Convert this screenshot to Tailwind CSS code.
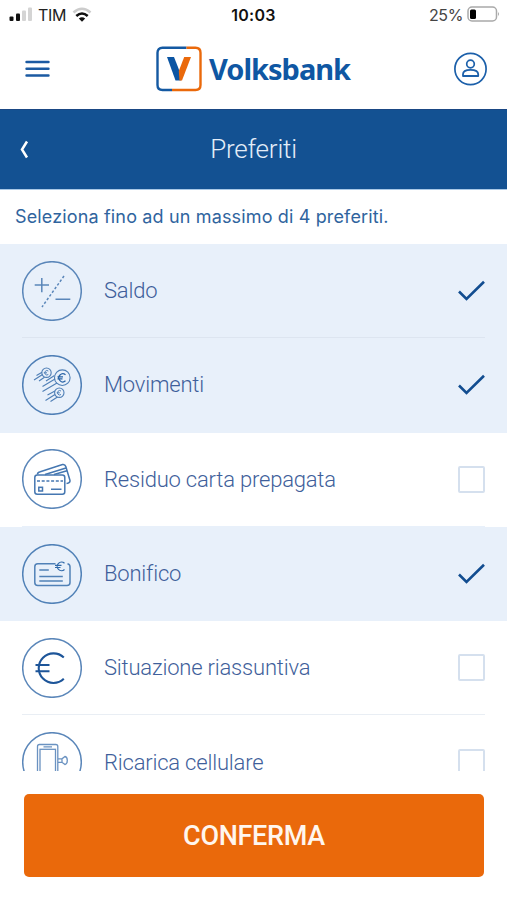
<!DOCTYPE html>
<html lang="it">
<head>
<meta charset="utf-8">
<title>Preferiti</title>
<script src="https://cdn.jsdelivr.net/npm/@tailwindcss/browser@4"></script>
</head>
<body class="bg-white">
<div class="flex h-[900px] w-[507px] flex-col overflow-hidden bg-white font-['Roboto',sans-serif]">
  <!-- Status bar -->
  <div class="grid h-[30px] grid-cols-3 items-center pl-[9px] pr-[7px] font-['Inter',sans-serif] text-[16px] text-[#222]">
    <div class="flex items-center">
      <svg class="w-[24px] h-[16px]" viewBox="0 0 24 16"><rect x="0.5" y="9.5" width="4" height="4.5" rx="1" fill="#111"/><rect x="7" y="6.5" width="4" height="7.500" rx="1" fill="#111"/><rect x="13" y="3.500" width="4" height="10.500" rx="1" fill="#d4d4d4"/><rect x="19" y="0.500" width="4" height="13.500" rx="1" fill="#d4d4d4"/></svg>
      <span class="ml-[5px] tracking-[-0.3px]">TIM</span>
      <svg class="ml-[6px] h-[16px] w-[20px]" viewBox="0 0 20 16" fill="none"><path d="M1.500 5.500Q10-2 18.500 5.500" stroke="#ccc" stroke-width="2.600"/><path d="M4.300 9Q10 4 15.700 9" stroke="#111" stroke-width="2.600"/><path d="M6.800 11.500Q10 9 13.200 11.500L10 14.700Z" fill="#111"/></svg>
    </div>
    <div class="pr-[2px] text-center font-semibold tracking-[0.3px] text-[#111]">10:03</div>
    <div class="flex items-center justify-end">
      <span class="mr-[4px] tracking-[-0.4px] text-[#444]">25%</span>
      <svg class="h-[18px] w-[33px]" viewBox="0 0 33 18" fill="none"><rect x="1" y="1" width="28.500" height="14" rx="4" stroke="#a9a9a9" stroke-width="1.500"/><rect x="3" y="3.500" width="6" height="9.500" rx="1.500" fill="#000"/><path d="M31 6Q33 8 31 10Z" fill="#a9a9a9"/></svg>
    </div>
  </div>
  <!-- Brand header -->
  <header class="flex h-[79px] items-center pb-[2px] pl-[25px] pr-[19px]">
    <svg class="h-[18px] w-[25px]" viewBox="0 0 25 18" stroke="#1b5aa2" stroke-width="2.400" stroke-linecap="round"><path d="M1.500 2H23.500M1.500 8.800H23.500M1.500 15.500H23.500"/></svg>
    <div class="ml-[106px] flex items-center">
      <svg class="h-[46px] w-[46px]" viewBox="0 0 46 46" fill="none"><path d="M30.500 1.800H6.500Q1.500 1.800 1.500 6.800V39Q1.500 44 6.500 44H16" stroke="#1459a2" stroke-width="2.400"/><path d="M30.500 1.800H39.500Q44.500 1.800 44.500 6.800V39Q44.500 44 39.500 44H16" stroke="#ea690b" stroke-width="2.400"/><path d="M11 11H18L23.500 25L24.800 34.500H19.500Z" fill="#0b55a3"/><path d="M28.200 11H35L26 34.500H23.500L22.800 25Z" fill="#ea690b"/></svg>
      <span class="ml-[7px] whitespace-nowrap font-['Noto_Sans',sans-serif] text-[29px] font-bold leading-[40px] tracking-[-1px] text-[#0f57a3]">Volksbank</span>
    </div>
    <svg class="ml-auto h-[34px] w-[34px]" viewBox="0 0 34 34" fill="none" stroke="#1c60aa"><circle cx="16.500" cy="17" r="15.600" stroke-width="1.700"/><circle cx="16.500" cy="12" r="3.800" stroke-width="1.700"/><path d="M9 24V22.300C9 19 12.500 17.800 16.500 17.800S24.200 19 24.200 22.300V24Z" stroke-width="1.800" stroke-linejoin="round"/></svg>
  </header>
  <!-- Title bar -->
  <div class="grid h-[80px] grid-cols-[60px_1fr_60px] items-center border-t border-[#1a4784] bg-[#135192]">
    <svg class="ml-[20px] h-[20px] w-[9px]" viewBox="0 0 9 20" fill="none" stroke="#fff" stroke-width="2.500"><path d="M7 1.500L2 9.500L7 17.500"/></svg>
    <h1 class="text-center text-[26px] font-light tracking-[-0.2px] text-[#e4edf8]">Preferiti</h1>
  </div>
  <p class="flex h-[55px] items-center border-t border-[#a9c8e6] pb-[1px] pl-[15px] font-['Inter',sans-serif] text-[18px] tracking-[0.150px] text-[#2f649e]"><span>Seleziona fino ad un massimo di 4 preferiti.</span></p>
  <!-- Favourites list -->
  <main class="h-[527px] overflow-hidden text-[22px] font-light tracking-[-0.200px] text-[#3f5f9b]">
    <div class="flex h-[94.300px] items-center bg-[#e8f0fa] px-[22px]">
      <div class="flex h-full w-full items-center border-b border-[#dde5f0]">
        <svg class="h-[60px] w-[60px]" viewBox="0 0 60 60" fill="none" stroke="#5a86b9" stroke-width="1.500"><circle cx="30" cy="30" r="29.300"/><path d="M12.700 24H27M19.800 17V31.300M33.500 38.300H48.300"/><path d="M42 15L20 46" stroke-dasharray="2.500 2"/></svg>
        <span class="ml-[22px] grow">Saldo</span>
        <svg class="h-[22px] w-[28px]" viewBox="0 0 28 22" fill="none" stroke="#124d90" stroke-width="2.600"><path d="M2 11.500L9.500 19L27 1.800"/></svg>
      </div>
    </div>
    <div class="flex h-[94.300px] items-center bg-[#e8f0fa] px-[22px]">
      <div class="flex h-full w-full items-center border-b border-[#e8f0fa]">
        <svg class="h-[60px] w-[60px]" viewBox="0 0 60 60" fill="none" stroke="#4f7fb6" stroke-width="1.100"><circle cx="30" cy="30" r="29.300" stroke-width="1.500"/><circle cx="24.500" cy="17.700" r="4.700"/><circle cx="40.300" cy="22.700" r="7.800"/><circle cx="37.300" cy="37.700" r="4.700"/><path d="M14.500 20.500L20 17.300M12 25L20.500 19.500M17 26L22.500 22.300M24 26L32.500 20.500M20.500 31.500L33 24M20.500 36.500L35 28M25.500 40L33 36M23.500 45.500L33 39.500M28.500 46.500L35.500 42"/><path d="M26.300 16A2.200 2.200 0 1 0 26.300 19.500M21.800 17.800H25M39 36A2.200 2.200 0 1 0 39 39.500M34.800 37.800H37.800" stroke-width="1"/><path d="M43.500 19.800A4 4 0 1 0 43.500 25.800M35.500 21.800H41M35.500 23.800H40.500" stroke="#2863a6" stroke-width="1.200"/></svg>
        <span class="ml-[22px] grow">Movimenti</span>
        <svg class="h-[22px] w-[28px]" viewBox="0 0 28 22" fill="none" stroke="#124d90" stroke-width="2.600"><path d="M2 11.500L9.500 19L27 1.800"/></svg>
      </div>
    </div>
    <div class="flex h-[94.300px] items-center px-[22px]">
      <div class="flex h-full w-full items-center border-b border-[#e8f0fa]">
        <svg class="h-[60px] w-[60px]" viewBox="0 0 60 60" fill="none" stroke="#4577b1" stroke-width="1.500"><circle cx="30" cy="30" r="29.300" stroke="#5a86b9"/><rect x="12.800" y="26" width="30" height="19.300" rx="2.500"/><path d="M15 32H41" stroke-dasharray="3 1.700"/><rect x="16.800" y="38.300" width="3.700" height="3.700"/><path d="M29 40.300H39.500M15.500 25.500Q15.300 23.600 17.500 23L40.500 15.500Q43 15 43.800 17.500L48 31.500Q48.300 34 44.500 34.500M23 25.500L44 19M32 25.500L45 21.800"/></svg>
        <span class="ml-[22px] grow">Residuo carta prepagata</span>
        <span class="h-[27px] w-[27px] rounded-[2px] border-2 border-[#d5e0ee]"></span>
      </div>
    </div>
    <div class="flex h-[94.300px] items-center bg-[#e8f0fa] px-[22px]">
      <div class="flex h-full w-full items-center border-b border-[#e8f0fa]">
        <svg class="h-[60px] w-[60px]" viewBox="0 0 60 60" fill="none" stroke="#5081b7" stroke-width="1.500"><circle cx="30" cy="30" r="29.300"/><path d="M33.500 19.800H15.800Q12.800 19.800 12.800 22.800V38.500Q12.800 41.500 15.800 41.500H45Q48 41.500 48 38.500V22.800Q48 20.500 45.500 19.800M17.300 26H26.800M17.300 32.500H40.800M17.300 37H40.800"/><path d="M42.500 19.300A4.300 4.300 0 1 0 42.500 25.500M33 21.300H39.500M33 23.500H38.500" stroke="#2f69aa" stroke-width="1.200"/></svg>
        <span class="ml-[22px] grow">Bonifico</span>
        <svg class="h-[22px] w-[28px]" viewBox="0 0 28 22" fill="none" stroke="#124d90" stroke-width="2.600"><path d="M2 11.500L9.500 19L27 1.800"/></svg>
      </div>
    </div>
    <div class="flex h-[94.300px] items-center px-[22px]">
      <div class="flex h-full w-full items-center border-b border-[#e9eef4]">
        <svg class="h-[60px] w-[60px]" viewBox="0 0 60 60" fill="none" stroke="#5a86b9" stroke-width="1.500"><circle cx="30" cy="30" r="29.300"/><path d="M41.800 19.500A14.800 14.800 0 1 0 41.800 40.800M13.500 27H27.500M13.500 33.300H27.500" stroke="#1d5599" stroke-width="2.100"/></svg>
        <span class="ml-[22px] grow">Situazione riassuntiva</span>
        <span class="h-[27px] w-[27px] rounded-[2px] border-2 border-[#d5e0ee]"></span>
      </div>
    </div>
    <div class="flex h-[94.300px] items-center px-[22px]">
      <div class="flex h-full w-full items-center border-b border-[#e9eef4]">
        <svg class="h-[60px] w-[60px]" viewBox="0 0 60 60" fill="none" stroke="#6a92c1" stroke-width="1.300"><circle cx="30" cy="30" r="29.300" stroke="#5a86b9" stroke-width="1.500"/><rect x="15.500" y="12.500" width="20.300" height="38" rx="2"/><rect x="18" y="17.300" width="15.500" height="28"/><path d="M21.500 14.800H30M36 26.800H40L43 24.500Q45.300 25 45.300 28.500T43 32.500L40 30.300H36M40 26.800V30.300"/></svg>
        <span class="ml-[22px] grow">Ricarica cellulare</span>
        <span class="h-[27px] w-[27px] rounded-[2px] border-2 border-[#d5e0ee]"></span>
      </div>
    </div>
  </main>
  <!-- Confirm action -->
  <div class="px-[24px] pt-[23px]">
    <button class="block h-[83px] w-[460px] rounded-[5px] bg-[#ea690b] pt-[2px] text-[27px] font-medium tracking-[-0.300px] text-[#fff6ee]">CONFERMA</button>
  </div>
</div>
</body>
</html>
